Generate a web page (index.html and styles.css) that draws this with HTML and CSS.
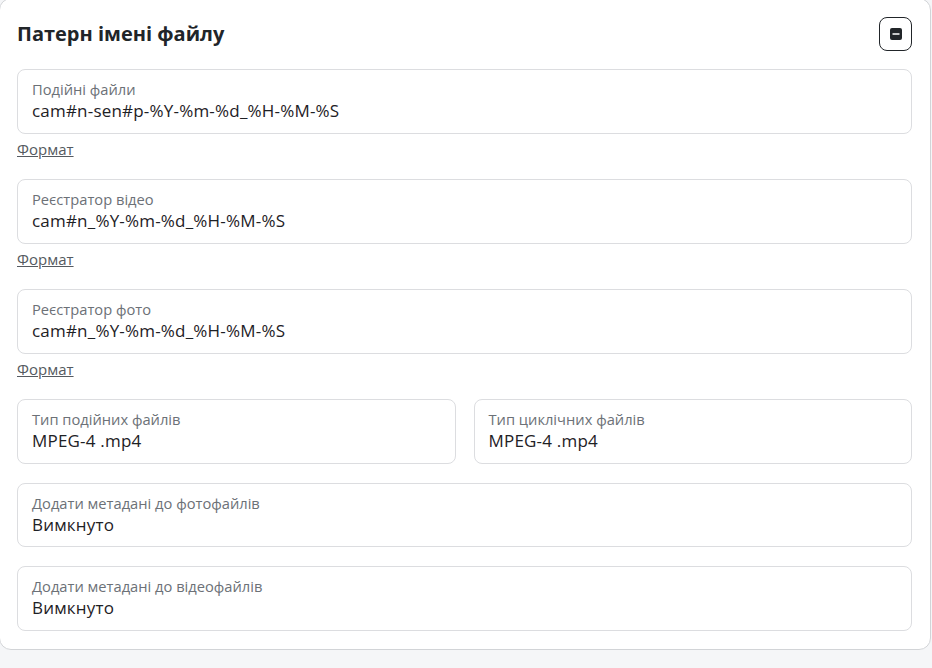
FILE: index.html
```html
<!DOCTYPE html>
<html>
	<head>
	<meta name="viewport" content="width=device-width, initial-scale=1.0"/>
	<link rel="stylesheet" href="styles.css">
	</head>
	<body>
		<div class="card">
			<div class="card-head">
				<h2 class="title">Патерн імені файлу</h2>
				<button class="toggle" type="button">
					<svg width="12" height="12" viewBox="0 0 12 12">
						<rect x="0" y="0" width="12" height="12" rx="2" fill="#212529"/>
						<rect x="2.5" y="5.25" width="7" height="1.5" fill="#ffffff"/>
					</svg>
				</button>
			</div>

			<div class="field">
				<div class="label">Подійні файли</div>
				<div class="value">cam#n-sen#p-%Y-%m-%d_%H-%M-%S</div>
			</div>
			<a class="hint" href="#">Формат</a>

			<div class="field">
				<div class="label">Реєстратор відео</div>
				<div class="value">cam#n_%Y-%m-%d_%H-%M-%S</div>
			</div>
			<a class="hint" href="#">Формат</a>

			<div class="field">
				<div class="label">Реєстратор фото</div>
				<div class="value">cam#n_%Y-%m-%d_%H-%M-%S</div>
			</div>
			<a class="hint" href="#">Формат</a>

			<div class="row">
				<div class="field">
					<div class="label">Тип подійних файлів</div>
					<div class="value">MPEG-4 .mp4</div>
				</div>
				<div class="field">
					<div class="label">Тип циклічних файлів</div>
					<div class="value">MPEG-4 .mp4</div>
				</div>
			</div>

			<div class="field">
				<div class="label">Додати метадані до фотофайлів</div>
				<div class="value">Вимкнуто</div>
			</div>

			<div class="field">
				<div class="label">Додати метадані до відеофайлів</div>
				<div class="value">Вимкнуто</div>
			</div>
		</div>
	</body>
</html>
```

FILE: styles.css
```css
	body {
		margin: 0;
		background-color: #f5f6f8;
		font-family: "Open Sans", "Noto Sans", sans-serif;
		color: #212529;
	}

	.card {
		box-sizing: border-box;
		width: 932px;
		margin: -2px 0 0 -1px;
		padding: 18px 18px 18px 17px;
		background-color: #ffffff;
		border: 1px solid #d2d4d7;
		border-radius: 12px;
		display: flex;
		flex-direction: column;
		gap: 19px;
	}

	.card-head {
		display: flex;
		align-items: center;
		justify-content: space-between;
		height: 34px;
		margin-bottom: -1px;
	}

	.title {
		margin: 0;
		font-size: 20px;
		font-weight: 700;
		line-height: 28px;
		color: #212529;
	}

	.toggle {
		box-sizing: border-box;
		width: 33px;
		height: 34px;
		padding: 0;
		border: 1.5px solid #212529;
		border-radius: 8px;
		background: #ffffff;
		display: flex;
		align-items: center;
		justify-content: center;
	}

	.toggle svg {
		display: block;
	}

	.field {
		box-sizing: border-box;
		height: 64.5px;
		padding: 9px 14px 0 14px;
		border: 1px solid #dcdde0;
		border-radius: 8px;
		background: #ffffff;
	}

	.label {
		font-size: 14.7px;
		line-height: 20px;
		color: #6c7177;
	}

	.value {
		font-size: 17px;
		letter-spacing: 0.2px;
		line-height: 24px;
		color: #1e2125;
	}

	.hint {
		align-self: flex-start;
		margin: -14px 0 1.5px 0;
		font-size: 15px;
		line-height: 20px;
		color: #555a60;
		text-decoration: underline;
	}

	.row {
		display: grid;
		grid-template-columns: 1fr 1fr;
		gap: 18px;
	}
```
